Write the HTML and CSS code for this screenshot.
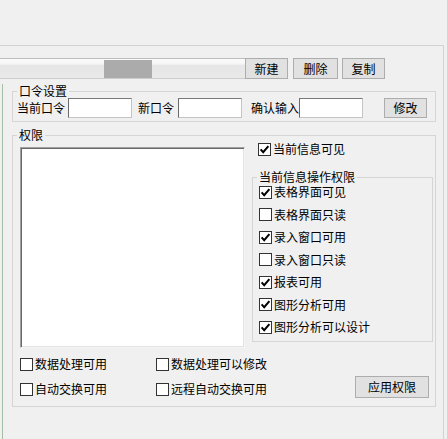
FILE: index.html
```html
<!DOCTYPE html>
<html lang="zh-CN">
<head>
<meta charset="utf-8">
<title>权限设置</title>
<link rel="stylesheet" href="styles.css">
</head>
<body>
<div class="top"></div>
<div class="panel">
  <div class="toolbar">
    <div class="track"><div class="thumb"></div></div>
    <button class="btn tb-new">新建</button>
    <button class="btn tb-del">删除</button>
    <button class="btn tb-copy">复制</button>
  </div>
  <div class="content">
    <fieldset class="pw">
      <legend>口令设置</legend>
      <div class="row">
        <span class="lbl">当前口令</span><input class="txt in1" type="password">
        <span class="lbl l2">新口令</span><input class="txt in2" type="password">
        <span class="lbl l3">确认输入</span><input class="txt" type="password">
        <button class="btn modify">修改</button>
      </div>
    </fieldset>
    <fieldset class="perm">
      <legend>权限</legend>
      <div class="upper">
        <div class="list"></div>
        <div class="side">
          <label class="chk vis"><span class="box"><svg viewBox="0 0 11 11"><path d="M1.6 5.4 L4.2 8.2 L9.4 2.2"/></svg></span>当前信息可见</label>
          <fieldset class="ops">
            <legend>当前信息操作权限</legend>
            <div class="ops-list">
              <label class="chk"><span class="box"><svg viewBox="0 0 11 11"><path d="M1.6 5.4 L4.2 8.2 L9.4 2.2"/></svg></span>表格界面可见</label>
              <label class="chk"><span class="box"></span>表格界面只读</label>
              <label class="chk"><span class="box"><svg viewBox="0 0 11 11"><path d="M1.6 5.4 L4.2 8.2 L9.4 2.2"/></svg></span>录入窗口可用</label>
              <label class="chk"><span class="box"></span>录入窗口只读</label>
              <label class="chk"><span class="box"><svg viewBox="0 0 11 11"><path d="M1.6 5.4 L4.2 8.2 L9.4 2.2"/></svg></span>报表可用</label>
              <label class="chk"><span class="box"><svg viewBox="0 0 11 11"><path d="M1.6 5.4 L4.2 8.2 L9.4 2.2"/></svg></span>图形分析可用</label>
              <label class="chk"><span class="box"><svg viewBox="0 0 11 11"><path d="M1.6 5.4 L4.2 8.2 L9.4 2.2"/></svg></span>图形分析可以设计</label>
            </div>
          </fieldset>
        </div>
      </div>
      <div class="lower">
        <label class="chk"><span class="box"></span>数据处理可用</label>
        <label class="chk"><span class="box"></span>数据处理可以修改</label>
        <label class="chk c1"><span class="box"></span>自动交换可用</label>
        <label class="chk c2"><span class="box"></span>远程自动交换可用</label>
        <button class="btn apply">应用权限</button>
      </div>
    </fieldset>
  </div>
</div>
</body>
</html>
```
FILE: styles.css
```css
html, body {
  margin: 0;
  padding: 0;
}
body {
  background: #f0f0f0;
  font-family: "Noto Sans CJK SC", "Noto Sans", sans-serif;
  font-size: 12px;
  line-height: 14px;
  color: #000;
  width: 447px;
  height: 439px;
  overflow: hidden;
}
.top {
  height: 45px;
}
.panel {
  width: 443px;
  height: 393px;
  border-top: 1px solid #d2d2d2;
  border-right: 1px solid #d2d2d2;
}
.toolbar {
  display: flex;
  margin-top: 12px;
  height: 21px;
}
.track {
  width: 245px;
  height: 21px;
  box-sizing: border-box;
  border-top: 1px solid #bdbdbd;
  border-bottom: 1px solid #cdcdcd;
  background: linear-gradient(#fbfbfb 0, #f6f6f6 25%, #e6e6e6 35%, #e9e9e9 100%);
  display: flex;
}
.thumb {
  margin-left: 104px;
  width: 48px;
  height: 18px;
  margin-top: 1px;
  background: #ababab;
}
.btn {
  box-sizing: border-box;
  height: 21px;
  border: 1px solid #adadad;
  background: #e1e1e1;
  font: inherit;
  color: #000;
  padding: 0;
  display: flex;
  align-items: center;
  justify-content: center;
}
.tb-new { width: 43px; }
.tb-del { width: 45px; margin-left: 5px; }
.tb-copy { width: 43px; margin-left: 4px; }
.content {
  margin: 5px 0 0 2px;
  border-left: 1px solid #a3c0a3;
  padding-left: 9px;
  height: 355px;
  box-sizing: border-box;
}
fieldset {
  margin: 0;
  border: 1px solid #d5d5d5;
  min-inline-size: 0;
  box-sizing: border-box;
}
legend {
  padding: 0 2px;
  line-height: 14px;
  height: 14px;
}
.pw {
  width: 424px;
  padding: 0 0 3px 4px;
}
.row {
  display: flex;
  align-items: center;
  height: 20px;
}
.lbl {
  white-space: nowrap;
}
.l2 { margin-left: 6px; margin-right: 4px; }
.l3 { margin-left: 9px; }
.txt {
  box-sizing: border-box;
  width: 64px;
  height: 20px;
  margin: 0;
  padding: 0;
  background: #fff;
  border: 1px solid;
  border-color: #7a7a7a #c4c4c4 #c4c4c4 #6a6a6a;
}
.in1 { margin-left: 3px; }
.modify {
  width: 43px;
  height: 20px;
  margin-left: 21px;
}
.perm {
  margin-top: 6px;
  width: 424px;
  padding: 0 2px 10px 7px;
}
.perm > legend {
  margin-left: -3px;
}
.upper {
  display: grid;
  grid-template-columns: 225px 181px;
  column-gap: 7px;
}
.list {
  margin-top: 5px;
  height: 201px;
  box-sizing: border-box;
  background: #fff;
  border: 1px solid;
  border-color: #a0a0a0 #f4f4f4 #f4f4f4 #a0a0a0;
  box-shadow: inset 1px 1px 0 #696969, inset -1px -1px 0 #e3e3e3;
}
.side .vis {
  margin-left: 6px;
}
.ops {
  margin-top: 14px;
  padding: 1px 0 7px 6px;
  width: 181px;
}
.ops > legend {
  margin-left: -2px;
}
.ops-list {
  display: flex;
  flex-direction: column;
  gap: 8.5px;
}
.chk {
  display: flex;
  align-items: center;
  height: 14px;
  line-height: 14px;
  white-space: nowrap;
}
.box {
  box-sizing: border-box;
  width: 13px;
  height: 13px;
  border: 1px solid #333;
  background: #fff;
  margin-right: 2px;
  flex: none;
  display: flex;
}
.box svg {
  width: 11px;
  height: 11px;
  fill: none;
  stroke: #000;
  stroke-width: 2;
}
.lower {
  display: grid;
  grid-template-columns: 136px 1fr auto;
  grid-template-rows: 14px 14px;
  row-gap: 11px;
  padding-top: 9px;
}
.c1 { grid-column: 1; grid-row: 2; }
.c2 { grid-column: 2; grid-row: 2; }
.apply {
  grid-column: 3;
  grid-row: 2;
  align-self: start;
  width: 74px;
  height: 22px;
  margin-top: -6px;
  margin-bottom: -2px;
  margin-right: 4px;
}
```
